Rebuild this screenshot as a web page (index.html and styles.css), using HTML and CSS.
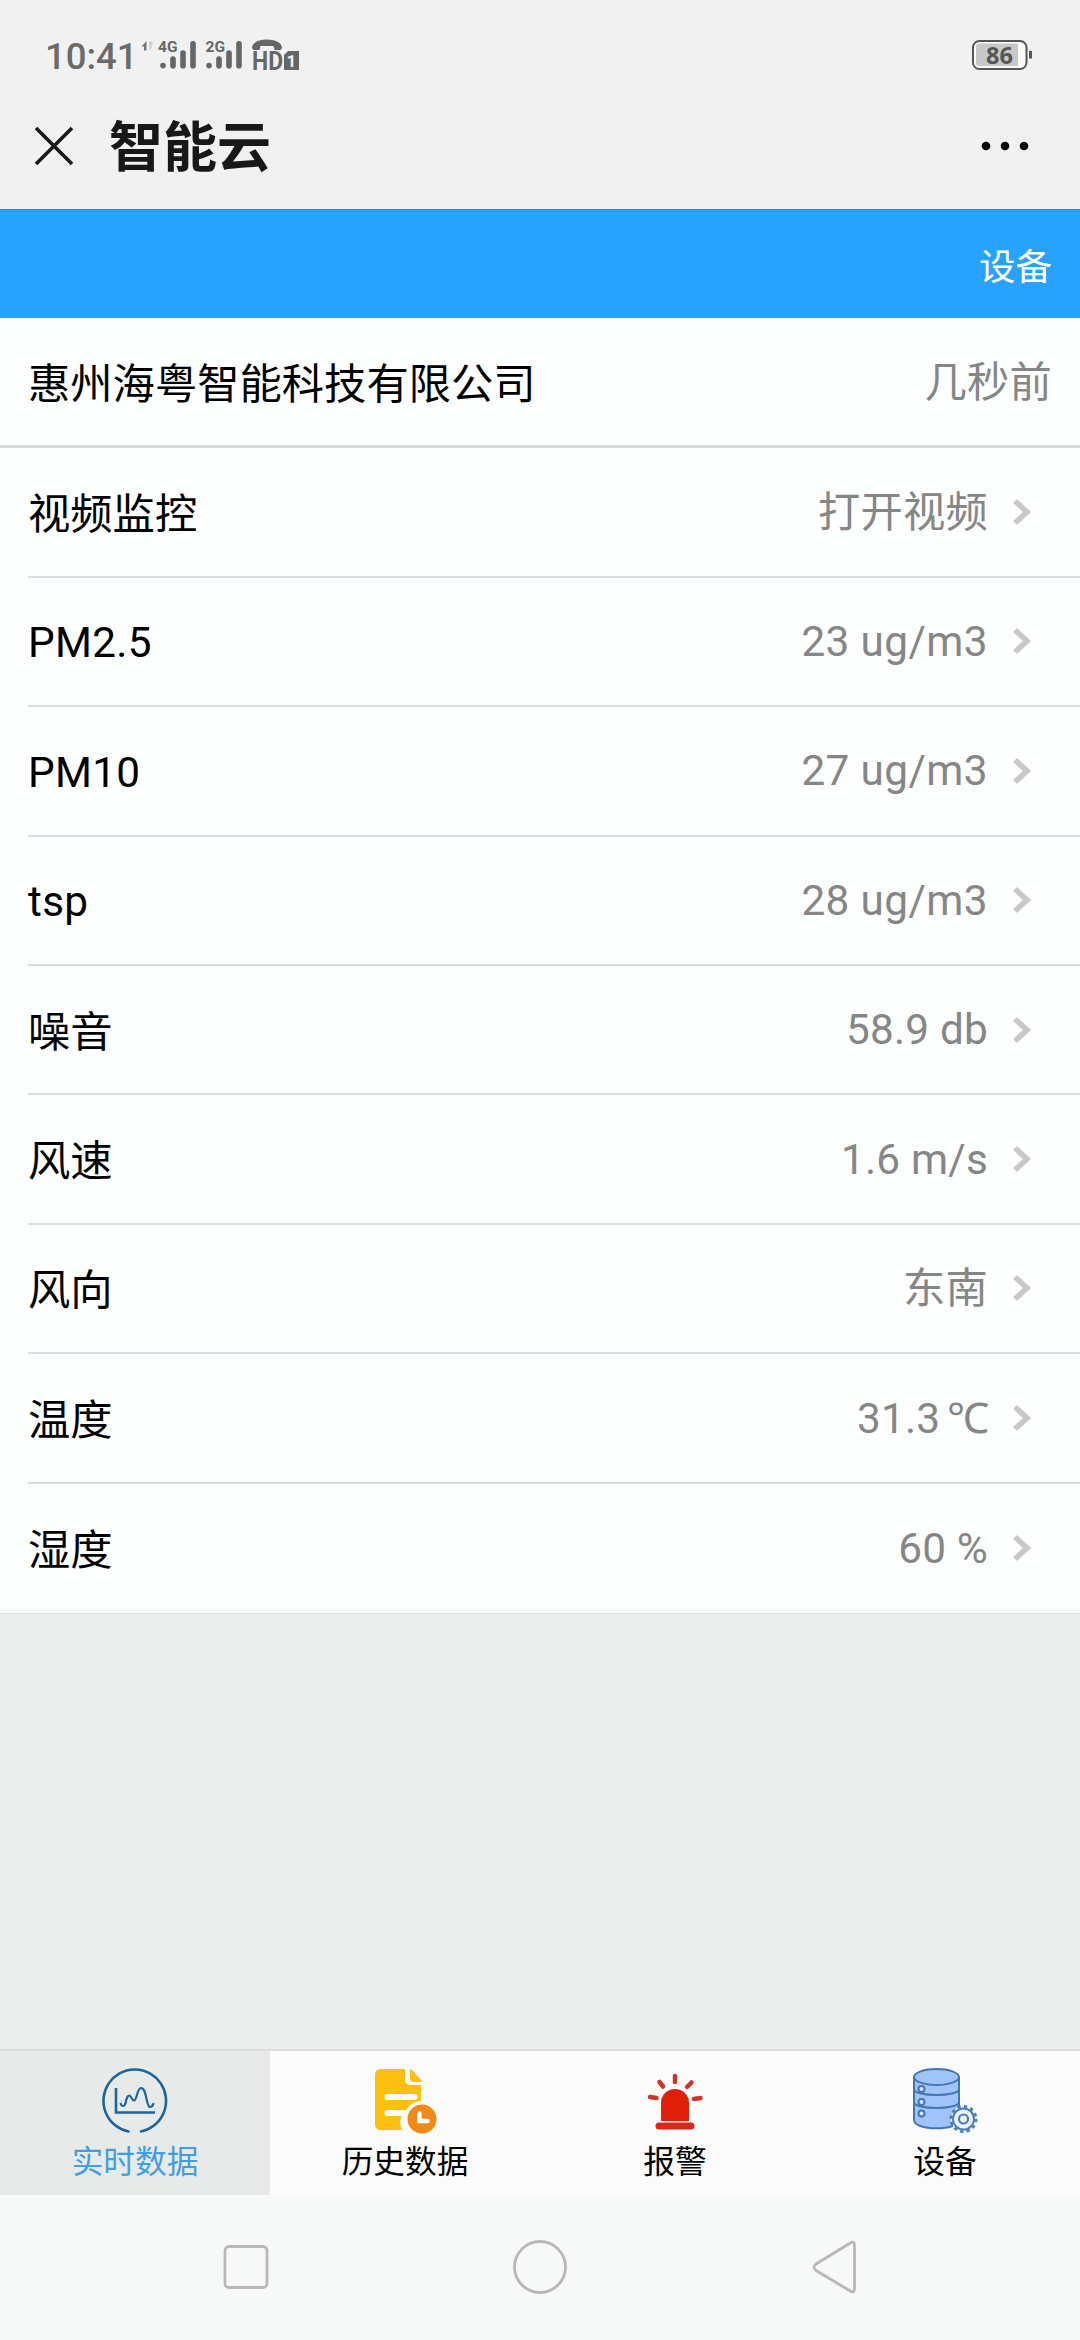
FILE: index.html
```
<!DOCTYPE html>
<html lang="zh-CN">
<head>
<meta charset="utf-8">
<title>智能云</title>
<link rel="stylesheet" href="styles.css">
</head>
<body>
<div class="screen">
  <header class="top">
    <div class="status">
      <span class="time">10:41</span>
      <svg class="signals" width="162" height="44" viewBox="0 -4 162 44">
        <path d="M5.500 3v9.500H3V8.500H.5z" fill="#777"/><path d="M8.500 3v9l2-2V6l2-1" fill="#c8c8c8"/>
        <text x="17" y="14" class="net" textLength="19.500" lengthAdjust="spacingAndGlyphs">4G</text>
        <g stroke="#666" stroke-width="5.600" stroke-linecap="round">
          <path d="M22 27.500v.1M32 21v6.800M42 15v12.800M52 5.700v22.100"/>
          <path d="M68 27.500v.1M78 21v6.800M88 15v12.800M98 5.700v22.100"/>
        </g>
        <text x="64.500" y="14" class="net" textLength="19.500" lengthAdjust="spacingAndGlyphs">2G</text>
        <path d="M111 10C111-1.500 141-1.500 141 10l-1.500 2h-6l-1-4H119.500l-1 4h-6z" fill="#666"/>
        <text x="111" y="31.700" class="hd" textLength="31" lengthAdjust="spacingAndGlyphs">HD</text>
        <path d="M147 13h11v19h-15V17z" fill="#666"/>
        <text x="145.500" y="28.500" class="sim">1</text>
      </svg>
      <svg class="battery" width="62" height="34" viewBox="0 0 62 34">
        <rect x="2" y="3" width="53.500" height="28" rx="6.500" fill="#fafafa" stroke="#555" stroke-width="2"/>
        <path d="M8 5.500h39v22.500H8Q5 28 5 25V8.500q0-3 3-3z" fill="#c8c8c8"/>
        <path d="M58 13h3v7.500h-3z" fill="#555"/>
        <text x="15" y="26" class="level">86</text>
      </svg>
    </div>
    <div class="titlebar">
      <svg class="close" width="40" height="40" viewBox="0 0 40 40"><path d="M2 2l36 36M38 2L2 38" stroke="#181818" stroke-width="3.600"/></svg>
      <h1 class="title">智能云</h1>
      <svg class="more" width="48" height="10" viewBox="0 0 48 10"><circle cx="5" cy="5" r="4.300"/><circle cx="24" cy="5" r="4.300"/><circle cx="43" cy="5" r="4.300"/></svg>
    </div>
  </header>
  <nav class="bluebar">设备</nav>
  <main class="list">
    <div class="row company"><span class="label">惠州海粤智能科技有限公司</span><span class="value">几秒前</span></div>
    <div class="row"><span class="label">视频监控</span><span class="value">打开视频</span><svg class="chev" viewBox="0 0 18 26"><path d="M2 2l12 11L2 24"/></svg></div>
    <div class="row latin"><span class="label">PM2.5</span><span class="value">23 ug/m3</span><svg class="chev" viewBox="0 0 18 26"><path d="M2 2l12 11L2 24"/></svg></div>
    <div class="row latin"><span class="label">PM10</span><span class="value">27 ug/m3</span><svg class="chev" viewBox="0 0 18 26"><path d="M2 2l12 11L2 24"/></svg></div>
    <div class="row latin"><span class="label">tsp</span><span class="value">28 ug/m3</span><svg class="chev" viewBox="0 0 18 26"><path d="M2 2l12 11L2 24"/></svg></div>
    <div class="row"><span class="label">噪音</span><span class="value">58.9 db</span><svg class="chev" viewBox="0 0 18 26"><path d="M2 2l12 11L2 24"/></svg></div>
    <div class="row"><span class="label">风速</span><span class="value">1.6 m/s</span><svg class="chev" viewBox="0 0 18 26"><path d="M2 2l12 11L2 24"/></svg></div>
    <div class="row"><span class="label">风向</span><span class="value">东南</span><svg class="chev" viewBox="0 0 18 26"><path d="M2 2l12 11L2 24"/></svg></div>
    <div class="row"><span class="label">温度</span><span class="value">31.3 <span class="degree">℃</span></span><svg class="chev" viewBox="0 0 18 26"><path d="M2 2l12 11L2 24"/></svg></div>
    <div class="row"><span class="label">湿度</span><span class="value">60 %</span><svg class="chev" viewBox="0 0 18 26"><path d="M2 2l12 11L2 24"/></svg></div>
  </main>
  <nav class="tabs">
    <a class="tab active">
      <svg class="icon" viewBox="0 0 70 70"><g fill="none" stroke="#1b659c" stroke-width="2.600"><path d="M28.500 65.500A31.300 31.300 0 1 1 41 65.500" stroke-linecap="round"/><path d="M16 22v24.500h39"/><path d="M20.500 37c1 4 4 4 5 0 1.500-7 2.500-7.500 4-7.500s2.500 5 4.500 5c3 0 3-12.500 7-12.500 6 0 5 19 9 19 3 0 3-2 3.500-4" stroke-width="2.200"/></g></svg>
      <span>实时数据</span>
    </a>
    <a class="tab">
      <svg class="icon" viewBox="0 0 70 70"><path d="M11 3h24v10q0 6 6 6h10v21a17 17 0 0 0-19 24H11q-6 0-6-6V9q0-6 6-6z" fill="#fdc010"/><path d="M40 3h1l11 12v1h-8q-4 0-4-4z" fill="#fdc010"/><g stroke="#fff" stroke-width="6" stroke-linecap="round"><path d="M17.500 31h27M17.500 47h18"/></g><circle cx="52" cy="53" r="18" fill="#fbfcfc"/><circle cx="52" cy="53" r="14.500" fill="#f28a18"/><path d="M49.500 47.500v7.500h8" fill="none" stroke="#fff" stroke-width="4.500" stroke-linecap="round"/></svg>
      <span>历史数据</span>
    </a>
    <a class="tab">
      <svg class="icon" viewBox="0 0 70 70"><path d="M21 55V37a14 14 0 0 1 28 0v18z" fill="#e01f0b"/><rect x="15.500" y="56.500" width="39" height="7" rx="3.500" fill="#d8281b"/><g stroke="#cf3429" stroke-width="4.500" stroke-linecap="round"><path d="M35 10v6M19.500 16l3.500 4.500M51.500 16.500L47 21M10 31l6.500 1M60.500 32l-6.500 1"/></g></svg>
      <span>报警</span>
    </a>
    <a class="tab">
      <svg class="icon" viewBox="0 0 70 70"><g stroke="#4276b5" stroke-width="2"><path d="M4 11v43c0 11 45 11 45 0V11" fill="#a0c3fa"/><ellipse cx="26.500" cy="11" rx="22.500" ry="8" fill="#a0c3fa"/><path d="M4 24c0 8 45 8 45 0M4 37c0 8 45 8 45 0" fill="none" transform="translate(0 -1)"/><g fill="#d9e8ff"><circle cx="11.500" cy="23" r="3"/><circle cx="11.500" cy="36" r="3"/><circle cx="11.500" cy="47.500" r="3"/></g></g><g fill="#eef4fb" stroke="#4f7fb8"><circle cx="53.500" cy="53" r="12.500" stroke-width="3" stroke-dasharray="3.300 3.245"/><circle cx="53.500" cy="53" r="10.500" stroke-width="2"/><circle cx="53.500" cy="53" r="4.500" stroke-width="2.200"/></g></svg>
      <span>设备</span>
    </a>
  </nav>
  <footer class="sysnav">
    <svg viewBox="0 0 60 60"><rect x="9" y="9.500" width="42" height="41" rx="4"/></svg>
    <svg viewBox="0 0 60 60"><circle cx="30" cy="30" r="25.500"/></svg>
    <svg viewBox="0 0 60 60"><path d="M45.500 6.500Q50.500 3 50.500 9v42q0 6-5 2.500L12 33.500q-4-3.500 0-6.500z"/></svg>
  </footer>
</div>
</body>
</html>
```
FILE: styles.css
```
* { box-sizing: border-box; }
body { margin: 0; font-family: Roboto, "Noto Sans CJK SC", sans-serif; color: #000; }
.screen { width: 1080px; height: 2340px; display: flex; flex-direction: column; background: #eceeed; overflow: hidden; }
svg { display: block; flex: none; overflow: visible; }
.top { height: 210px; background: #f1f1f1; border-bottom: 1px solid #3486c4; }
.status { height: 78px; display: flex; align-items: flex-start; padding: 38px 47px 0 45px; }
.time { font-size: 36.500px; font-weight: 500; line-height: 38px; color: #6a6a6a; width: 96px; }
.signals { margin-top: -4px; }
.battery { margin-left: auto; }
.net { font: bold 14.500px Roboto, sans-serif; fill: #666; }
.hd { font: bold 25.500px Roboto, sans-serif; fill: #666; }
.sim { font: bold 17px Roboto, sans-serif; fill: #f1f1f1; }
.level { font: bold 23.500px "Open Sans", sans-serif; fill: #555; }
.titlebar { height: 132px; display: flex; align-items: center; padding: 3px 51px 0 34px; }
.title { margin: 0 auto 0 35px; padding-top: 6px; font-size: 54px; line-height: 80px; font-weight: 700; color: #181818; }
.bluebar { height: 108px; background: #27a2fe; color: #fff; text-align: right; padding-right: 28px; font-size: 36.500px; line-height: 116px; }
.list { background: #fdfefe; height: 1296px; padding-top: 1px; border-bottom: 1px solid #dfe1e0; }
.row { height: 129.400px; padding-right: 49px; margin-left: 28px; border-bottom: 2px solid #dcdede; display: flex; align-items: center; font-size: 42.300px; line-height: 60px; }
.row:last-child { border: 0; }
.company { margin: 0; padding: 0 28px; border-bottom: 3px solid #d9dbdb; }
.label { margin-right: auto; padding-top: 6px; }
.value { color: #868686; letter-spacing: 0.200px; padding-top: 1px; }
.latin .label { letter-spacing: 0.300px; padding-top: 4px; }
.latin .value { letter-spacing: 0.400px; }
.degree { font-family: "Open Sans", "Noto Sans", sans-serif; letter-spacing: -1px; margin-left: -4px; }
.chev { width: 18px; height: 26px; margin-left: 25px; fill: none; stroke: #c8c8c8; stroke-width: 5.600; }
.tabs { margin-top: auto; height: 146px; display: flex; background: #fbfbfb; border-top: 2px solid #dcdede; }
.tab { flex: 1; display: flex; flex-direction: column; align-items: center; padding-top: 15px; font-size: 31.700px; line-height: 46px; }
.icon { width: 70px; height: 70px; margin-bottom: 4px; }
.active { background: #e8e9e9; color: #3f9fe0; }
.sysnav { height: 145px; background: #f7f9f8; display: flex; justify-content: space-between; padding: 42px 216px 0; }
.sysnav svg { width: 60px; height: 60px; fill: none; stroke: #b8b8b8; stroke-width: 2.800; }
```
